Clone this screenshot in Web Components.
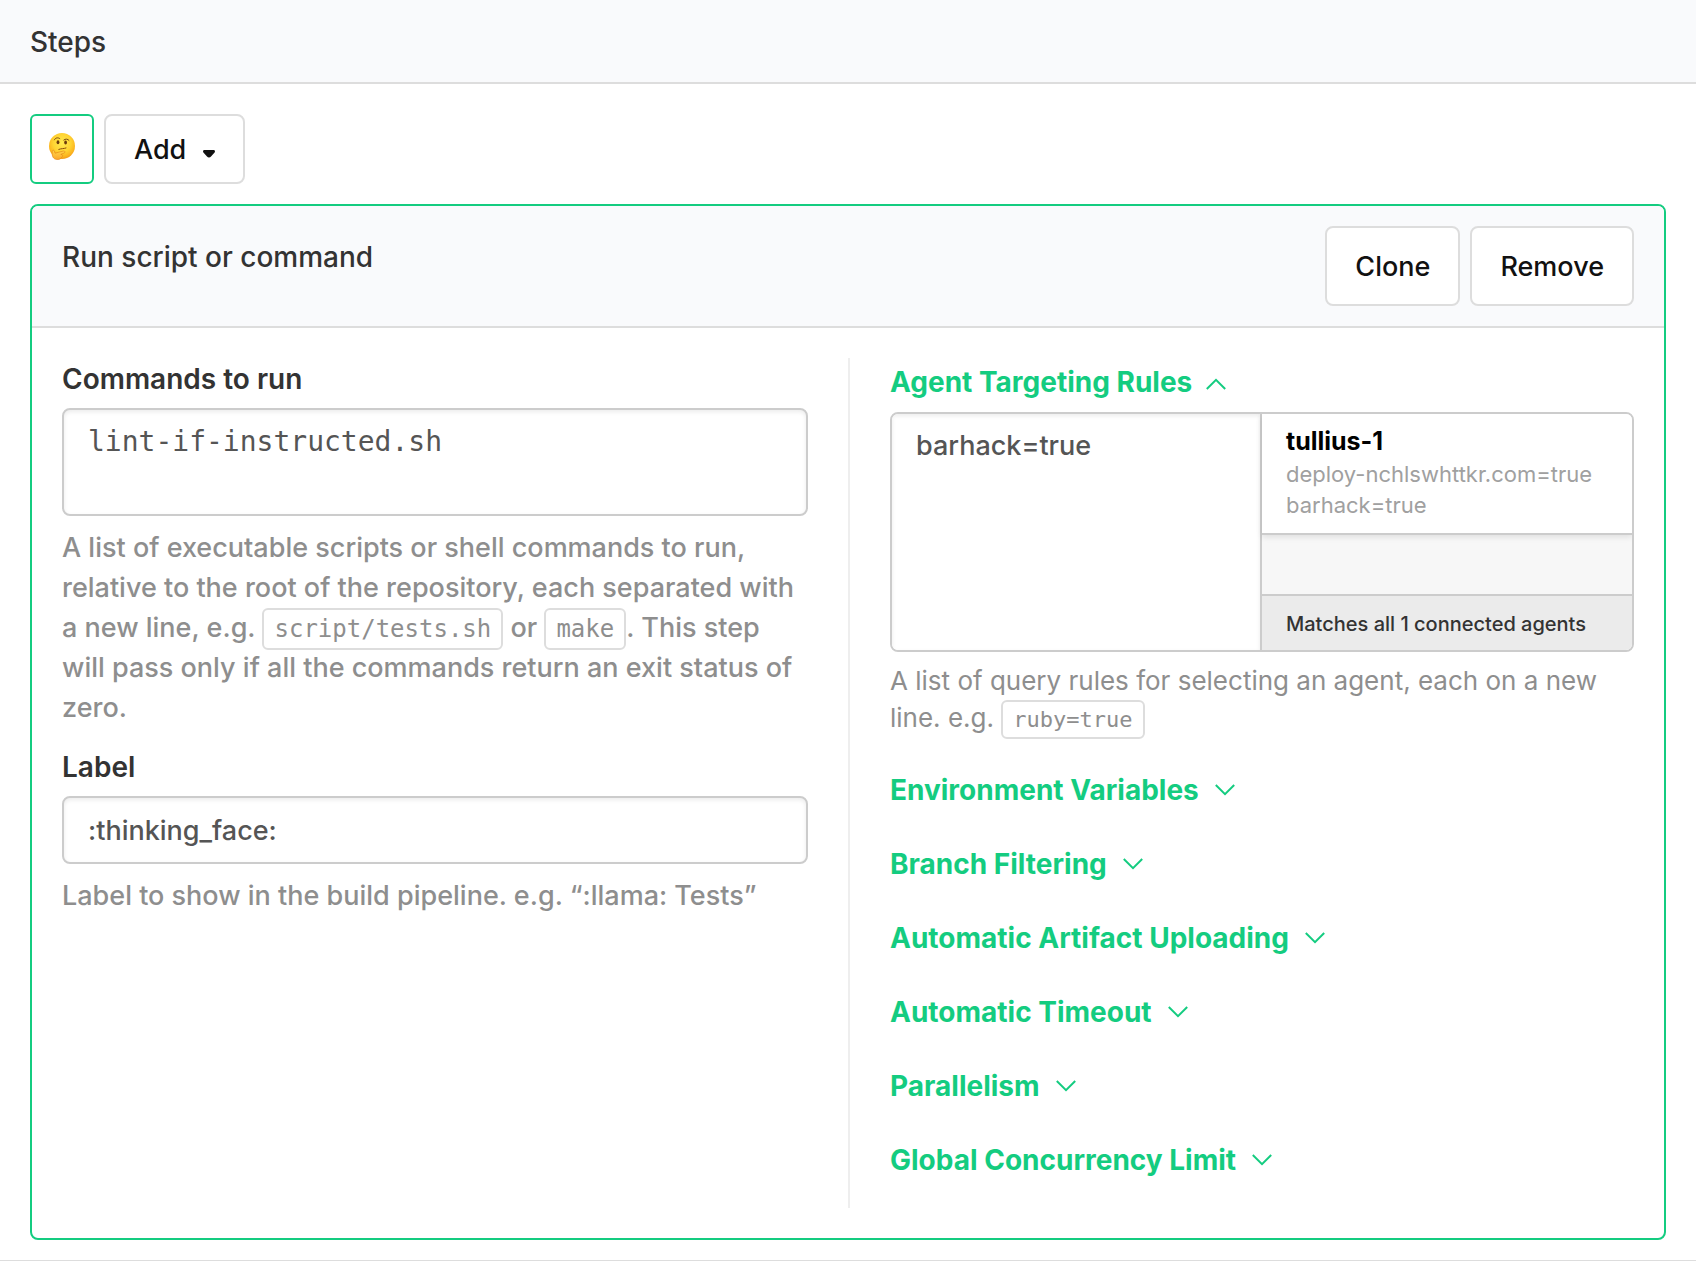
<!DOCTYPE html>
<html lang="en">
<head>
<meta charset="utf-8">
<meta name="viewport" content="width=device-width, initial-scale=1">
<title>Steps</title>
<style>
  :root {
    --green: #14cc80;
    --line: #ddd;
    --field-line: #ccc;
    --panel: #f9fafc;
    --ink: #333;
    --field-ink: #555;
    --muted: #8e8e8e;
    --mono: "DejaVu Sans Mono", "Liberation Mono", monospace;
  }
  body {
    margin: 0;
    background: #fff;
    color: var(--ink);
    font: 500 27px/40px Inter, "Liberation Sans", sans-serif;
  }
</style>
</head>
<body>
<pipeline-steps></pipeline-steps>

<template id="pipeline-steps">
  <style>
    :host { display: block; border-bottom: 1px solid var(--line); }
    header { padding: 21px 30px 19px; background: var(--panel); border-bottom: 2px solid var(--line); }
    h1 { margin: 0; font-size: 28px; line-height: 42px; font-weight: 500; }
    main { display: flex; flex-direction: column; gap: 20px; padding: 30px 30px 20px; }
    nav { display: flex; gap: 10px; }
  </style>
  <header><h1>Steps</h1></header>
  <main>
    <nav aria-label="Steps">
      <step-tab label="Thinking face"></step-tab>
      <ui-button compact menu>Add</ui-button>
    </nav>
    <step-panel heading="Run script or command">
      <ui-button slot="actions">Clone</ui-button>
      <ui-button slot="actions">Remove</ui-button>

      <form-field slot="main" label="Commands to run" rows="2" mono value="lint-if-instructed.sh">
        A list of executable scripts or shell commands to run, relative to the root of the repository, each separated with a new line, e.g. <code-chip>script/tests.sh</code-chip> or <code-chip>make</code-chip>. This step will pass only if all the commands return an exit status of zero.
      </form-field>
      <form-field slot="main" label="Label" value=":thinking_face:">
        Label to show in the build pipeline. e.g. “:llama: Tests”
      </form-field>

      <collapsible-section slot="side" heading="Agent Targeting Rules" open>
        <agent-rules value="barhack=true" summary="Matches all 1 connected agents">
          <agent-card name="tullius-1"><span>deploy-nchlswhttkr.com=true</span><span>barhack=true</span></agent-card>
          <span slot="help">A list of query rules for selecting an agent, each on a new line. e.g. <code-chip small>ruby=true</code-chip></span>
        </agent-rules>
      </collapsible-section>
      <collapsible-section slot="side" heading="Environment Variables"></collapsible-section>
      <collapsible-section slot="side" heading="Branch Filtering"></collapsible-section>
      <collapsible-section slot="side" heading="Automatic Artifact Uploading"></collapsible-section>
      <collapsible-section slot="side" heading="Automatic Timeout"></collapsible-section>
      <collapsible-section slot="side" heading="Parallelism"></collapsible-section>
      <collapsible-section slot="side" heading="Global Concurrency Limit"></collapsible-section>
    </step-panel>
  </main>
</template>

<template id="step-tab">
  <style>
    :host { display: block; }
    button { display: flex; box-sizing: border-box; height: 70px; margin: 0; padding: 16px 16px 0; border: 2px solid var(--green); border-radius: 6px; background: #fff; cursor: pointer; }
    svg { display: block; width: 28px; height: 28px; }
  </style>
  <button type="button" aria-pressed="true">
    <svg viewBox="0 0 28 28" aria-hidden="true">
      <defs>
        <radialGradient id="face" cx="50%" cy="38%" r="62%">
          <stop offset="0" stop-color="#ffe94f"/><stop offset=".55" stop-color="#ffd433"/><stop offset=".85" stop-color="#fbb41f"/><stop offset="1" stop-color="#f29a1c"/>
        </radialGradient>
        <linearGradient id="hand" x1="0" y1="0" x2="0" y2="1">
          <stop offset="0" stop-color="#ffd84a"/><stop offset="1" stop-color="#fba62a"/>
        </linearGradient>
      </defs>
      <circle cx="14" cy="14" r="13" fill="url(#face)"/>
      <ellipse cx="10" cy="10.2" rx="1.4" ry="2" fill="#6b3a0c"/>
      <ellipse cx="17.6" cy="10.6" rx="1.4" ry="2" fill="#6b3a0c"/>
      <path d="M6.4 7.8C7.4 5.6 10 5.2 11.8 6.6M15.8 8C17.4 6.6 19.8 6.8 21 8.4" fill="none" stroke="#7a4a12" stroke-width="1" stroke-linecap="round"/>
      <path d="M10.8 17.4C13 16.4 16 16.8 18 16" fill="none" stroke="#8a4b0c" stroke-width="1" stroke-linecap="round"/>
      <path d="M4.2 19.8C4.2 18 6 17.6 6.4 19.2L7 21.2C9.4 20.8 12.4 19.4 15.4 19C17.4 18.8 17.6 20.6 15.8 21.2L12.8 22.4C15 22.4 15.2 24.6 13.6 25.2C13.2 27 10.6 27.8 8.4 27.4C5.4 27 3.8 24.4 4.2 19.8Z" fill="url(#hand)" stroke="#e58a1a" stroke-width=".7"/>
    </svg>
  </button>
</template>

<template id="ui-button">
  <style>
    :host { display: block; }
    button { display: flex; align-items: center; box-sizing: border-box; height: 80px; margin: 0; padding: 2px 28px 0; border: 2px solid var(--line); border-radius: 8px; background: #fff; color: #111; font: inherit; cursor: pointer; }
    :host([compact]) button { height: 70px; }
    svg { display: none; width: 12px; height: 8px; margin: 7px 0 0 17px; }
    :host([menu]) svg { display: block; }
  </style>
  <button type="button"><slot></slot><svg viewBox="0 0 12 8" aria-hidden="true"><path d="M1.4 0H10.6C11.8 0 12.4 1.4 11.6 2.4L8 6.6C7 7.8 5 7.8 4 6.6L.4 2.4C-.4 1.4 .2 0 1.4 0Z" fill="#111"/></svg></button>
</template>

<template id="step-panel">
  <style>
    :host { display: block; border: 2px solid var(--green); border-radius: 8px; overflow: hidden; }
    header { display: flex; justify-content: space-between; padding: 20px 30px; background: var(--panel); border-bottom: 2px solid var(--line); }
    h2 { margin: 10px 0 0; font-size: 28px; line-height: 42px; font-weight: 500; }
    .actions { display: flex; gap: 10px; }
    .body { display: grid; grid-template-columns: calc(50% - 40px) 2px minmax(0, 1fr); gap: 40px; padding: 30px; }
    .main, .side { display: flex; flex-direction: column; }
    .main { gap: 18px; }
    .side { gap: 26px; padding-bottom: 24px; }
    .rule { background: #eee; }
  </style>
  <header><h2></h2><div class="actions"><slot name="actions"></slot></div></header>
  <div class="body">
    <div class="main"><slot name="main"></slot></div>
    <div class="rule"></div>
    <div class="side"><slot name="side"></slot></div>
  </div>
</template>

<template id="form-field">
  <style>
    :host { display: block; }
    label { display: block; margin-bottom: 8px; font-size: 28px; line-height: 42px; font-weight: 600; }
    input, textarea { display: block; box-sizing: border-box; width: 100%; margin: 0; padding: 12px 24px; border: 2px solid var(--field-line); border-radius: 8px; background: #fff; box-shadow: inset 0 2px 4px rgba(0,0,0,.08); color: var(--field-ink); font: inherit; resize: none; outline: 0; }
    input { height: 68px; }
    :host([mono]) textarea { font-family: var(--mono); font-size: 28px; }
    p { margin: 12px 0 0; color: var(--muted); }
  </style>
  <label for="control"></label>
  <p id="help"><slot></slot></p>
</template>

<template id="code-chip">
  <style>
    :host { display: inline; }
    code { padding: 5px 10px; border: 2px solid var(--line); border-radius: 6px; font: 24px var(--mono); white-space: nowrap; }
    :host([small]) code { font-size: 22px; }
  </style><code><slot></slot></code></template>

<template id="collapsible-section">
  <style>
    :host { display: block; }
    button { display: flex; align-items: center; gap: 16px; margin: 0; padding: 4px 0; border: 0; background: none; color: var(--green); font: inherit; font-size: 28px; font-weight: 700; text-align: left; cursor: pointer; }
    svg { width: 20px; height: 12px; }
    :host([open]) button { gap: 14px; }
    :host([open]) svg { margin-top: 4px; transform: rotate(180deg); }
    .content { display: none; margin: 6px 0 4px; }
    :host([open]) .content { display: block; }
  </style>
  <button type="button"><span></span><svg viewBox="0 0 20 12" aria-hidden="true"><path d="M.8 1L10 10.2L19.2 1" fill="none" stroke="currentColor" stroke-width="2"/></svg></button>
  <div class="content"><slot></slot></div>
</template>

<template id="agent-rules">
  <style>
    :host { display: block; }
    .box { display: grid; grid-template-columns: 1fr 1fr; box-sizing: border-box; min-height: 240px; border: 2px solid var(--field-line); border-radius: 8px; overflow: hidden; }
    textarea { display: block; box-sizing: border-box; width: 100%; height: 100%; margin: 0; padding: 12px 24px; border: 0; border-right: 2px solid var(--field-line); background: #fff; box-shadow: inset 0 2px 4px rgba(0,0,0,.08); color: var(--field-ink); font: inherit; resize: none; outline: 0; }
    .matches { display: flex; flex-direction: column; min-width: 0; background: #f7f7f7; }
    .list { flex: 1; }
    .summary { padding: 8px 24px 6px; border-top: 2px solid var(--field-line); background: #ebebeb; font-size: 20px; line-height: 40px; }
    p { margin: 10px 0 0; color: var(--muted); font-size: 26px; font-weight: 400; line-height: 37px; }
  </style>
  <div class="box">
    <textarea aria-label="Agent Targeting Rules" spellcheck="false"></textarea>
    <div class="matches"><div class="list"><slot></slot></div><div class="summary"></div></div>
  </div>
  <p><slot name="help"></slot></p>
</template>

<template id="agent-card">
  <style>
    :host { display: block; padding: 10px 24px 12px; border-bottom: 2px solid var(--field-line); background: #fff; box-shadow: 0 2px 6px rgba(0,0,0,.1); }
    strong { display: block; color: #000; font-size: 25px; line-height: 35px; font-weight: 700; }
    ::slotted(span) { display: block; color: #a0a0a0; font-size: 22px; font-weight: 400; line-height: 31px; }
  </style>
  <strong></strong>
  <slot></slot>
</template>

<script>
  class TemplateElement extends HTMLElement {
    connectedCallback() {
      if (this.shadowRoot) return;
      const template = document.getElementById(this.localName);
      this.attachShadow({ mode: "open" }).append(template.content.cloneNode(true));
      this.ready(this.shadowRoot);
    }
    ready() {}
  }

  class PipelineSteps extends TemplateElement {}
  class CodeChip extends TemplateElement {}

  class StepTab extends TemplateElement {
    ready(root) {
      root.querySelector("button").setAttribute("aria-label", this.getAttribute("label"));
    }
  }

  class UiButton extends TemplateElement {
    ready(root) {
      if (this.hasAttribute("menu")) root.querySelector("button").setAttribute("aria-haspopup", "menu");
    }
  }

  class StepPanel extends TemplateElement {
    ready(root) {
      root.querySelector("h2").textContent = this.getAttribute("heading");
    }
  }

  class FormField extends TemplateElement {
    ready(root) {
      const rows = this.getAttribute("rows");
      const control = document.createElement(rows ? "textarea" : "input");
      if (rows) control.rows = Number(rows);
      else control.type = "text";
      control.id = "control";
      control.spellcheck = false;
      control.value = this.getAttribute("value");
      control.setAttribute("aria-describedby", "help");
      const label = root.querySelector("label");
      label.textContent = this.getAttribute("label");
      label.after(control);
    }
  }

  class CollapsibleSection extends TemplateElement {
    ready(root) {
      const button = root.querySelector("button");
      root.querySelector("span").textContent = this.getAttribute("heading");
      button.setAttribute("aria-expanded", this.hasAttribute("open"));
      button.addEventListener("click", () => {
        button.setAttribute("aria-expanded", this.toggleAttribute("open"));
      });
    }
  }

  class AgentRules extends TemplateElement {
    ready(root) {
      root.querySelector("textarea").value = this.getAttribute("value");
      root.querySelector(".summary").textContent = this.getAttribute("summary");
    }
  }

  class AgentCard extends TemplateElement {
    ready(root) {
      root.querySelector("strong").textContent = this.getAttribute("name");
    }
  }

  customElements.define("pipeline-steps", PipelineSteps);
  customElements.define("code-chip", CodeChip);
  customElements.define("step-tab", StepTab);
  customElements.define("ui-button", UiButton);
  customElements.define("step-panel", StepPanel);
  customElements.define("form-field", FormField);
  customElements.define("collapsible-section", CollapsibleSection);
  customElements.define("agent-rules", AgentRules);
  customElements.define("agent-card", AgentCard);
</script>
</body>
</html>
